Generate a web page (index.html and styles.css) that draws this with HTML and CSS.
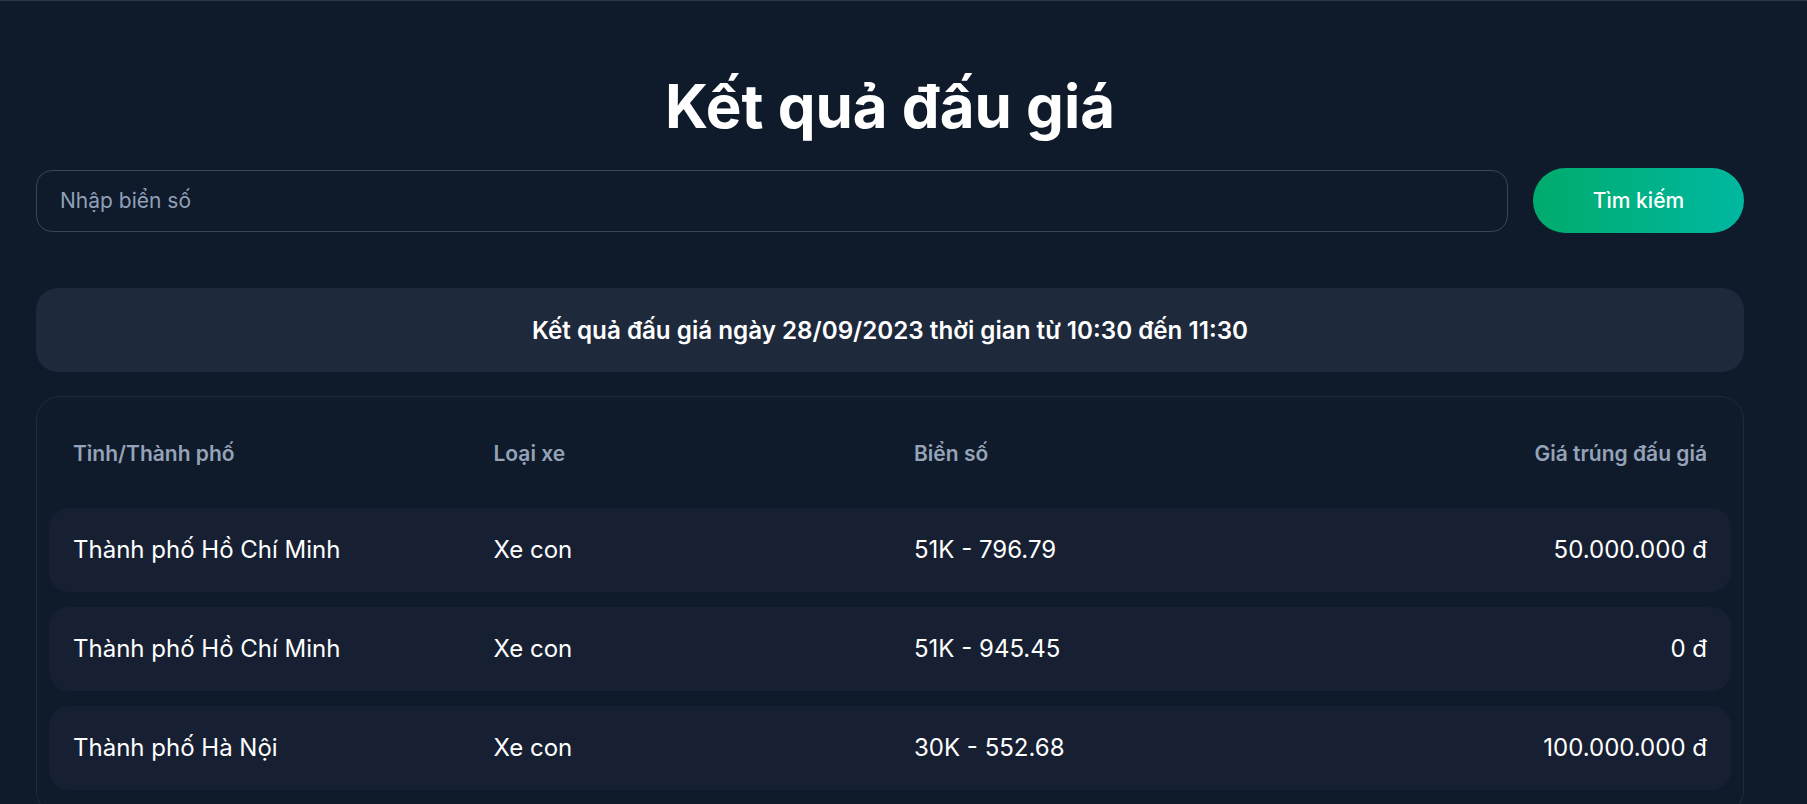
FILE: index.html
```html
<!DOCTYPE html>
<html lang="vi">
<head>
<meta charset="utf-8">
<title>Kết quả đấu giá</title>
<link rel="stylesheet" href="styles.css">
</head>
<body>
<main class="container">
  <h1 class="title">Kết quả đấu giá</h1>
  <form class="search" onsubmit="return false">
    <input class="search-input" type="text" placeholder="Nhập biển số">
    <button class="search-btn" type="submit">Tìm kiếm</button>
  </form>
  <div class="info">Kết quả đấu giá ngày 28/09/2023 thời gian từ 10:30 đến 11:30</div>
  <section class="table-card">
    <div class="thead">
      <div>Tỉnh/Thành phố</div>
      <div>Loại xe</div>
      <div>Biển số</div>
      <div class="right">Giá trúng đấu giá</div>
    </div>
    <div class="row">
      <div>Thành phố Hồ Chí Minh</div>
      <div>Xe con</div>
      <div>51K - 796.79</div>
      <div class="right">50.000.000 đ</div>
    </div>
    <div class="row">
      <div>Thành phố Hồ Chí Minh</div>
      <div>Xe con</div>
      <div>51K - 945.45</div>
      <div class="right">0 đ</div>
    </div>
    <div class="row">
      <div>Thành phố Hà Nội</div>
      <div>Xe con</div>
      <div>30K - 552.68</div>
      <div class="right">100.000.000 đ</div>
    </div>
  </section>
</main>
</body>
</html>
```
FILE: styles.css
```css
* { box-sizing: border-box; }
html, body { margin: 0; padding: 0; }
body {
  background: #0f1a2a;
  color: #ffffff;
  font-family: Inter, "Noto Sans", sans-serif;
  border-top: 1px solid #2c3544;
  min-height: 100vh;
}
.container {
  width: 1708px;
  margin-left: 36px;
  padding-top: 75px;
  padding-bottom: 40px;
}
.title {
  margin: 0;
  text-align: center;
  font-size: 60px;
  line-height: 60px;
  font-weight: 700;
}
.search {
  margin-top: 32px;
  display: flex;
  align-items: center;
  gap: 25px;
}
.search-input {
  flex: 1;
  height: 62px;
  background: transparent;
  border: 1px solid #3a4557;
  border-radius: 16px;
  padding: 0 23px;
  font-family: Inter, "Noto Sans", sans-serif;
  font-size: 21px;
  color: #fff;
  outline: none;
}
.search-input::placeholder { color: #8fa0b8; }
.search-btn {
  width: 211px;
  height: 65px;
  border: 0;
  border-radius: 9999px;
  background: linear-gradient(to right, #00ab6b, #00b8a1);
  color: #fff;
  font-family: Inter, "Noto Sans", sans-serif;
  font-size: 21px;
  font-weight: 500;
}
.info {
  margin-top: 55px;
  background: #1e293b;
  border-radius: 22px;
  height: 84px;
  display: flex;
  align-items: center;
  justify-content: center;
  font-size: 24.2px;
  font-weight: 600;
}
.table-card {
  margin-top: 24px;
  border: 1px solid #1f2a3b;
  border-radius: 24px;
  padding: 16px 12px 24px;
  display: flex;
  flex-direction: column;
  gap: 15px;
}
.thead, .row {
  display: grid;
  grid-template-columns: repeat(4, 1fr);
  column-gap: 48px;
  padding: 0 24px;
  align-items: center;
}
.thead {
  height: 80px;
  color: #94a3b8;
  font-size: 21px;
  font-weight: 600;
}
.row {
  height: 84px;
  background: #172032;
  border-radius: 20px;
  font-size: 24px;
  line-height: 36px;
}
.right { text-align: right; }
```
